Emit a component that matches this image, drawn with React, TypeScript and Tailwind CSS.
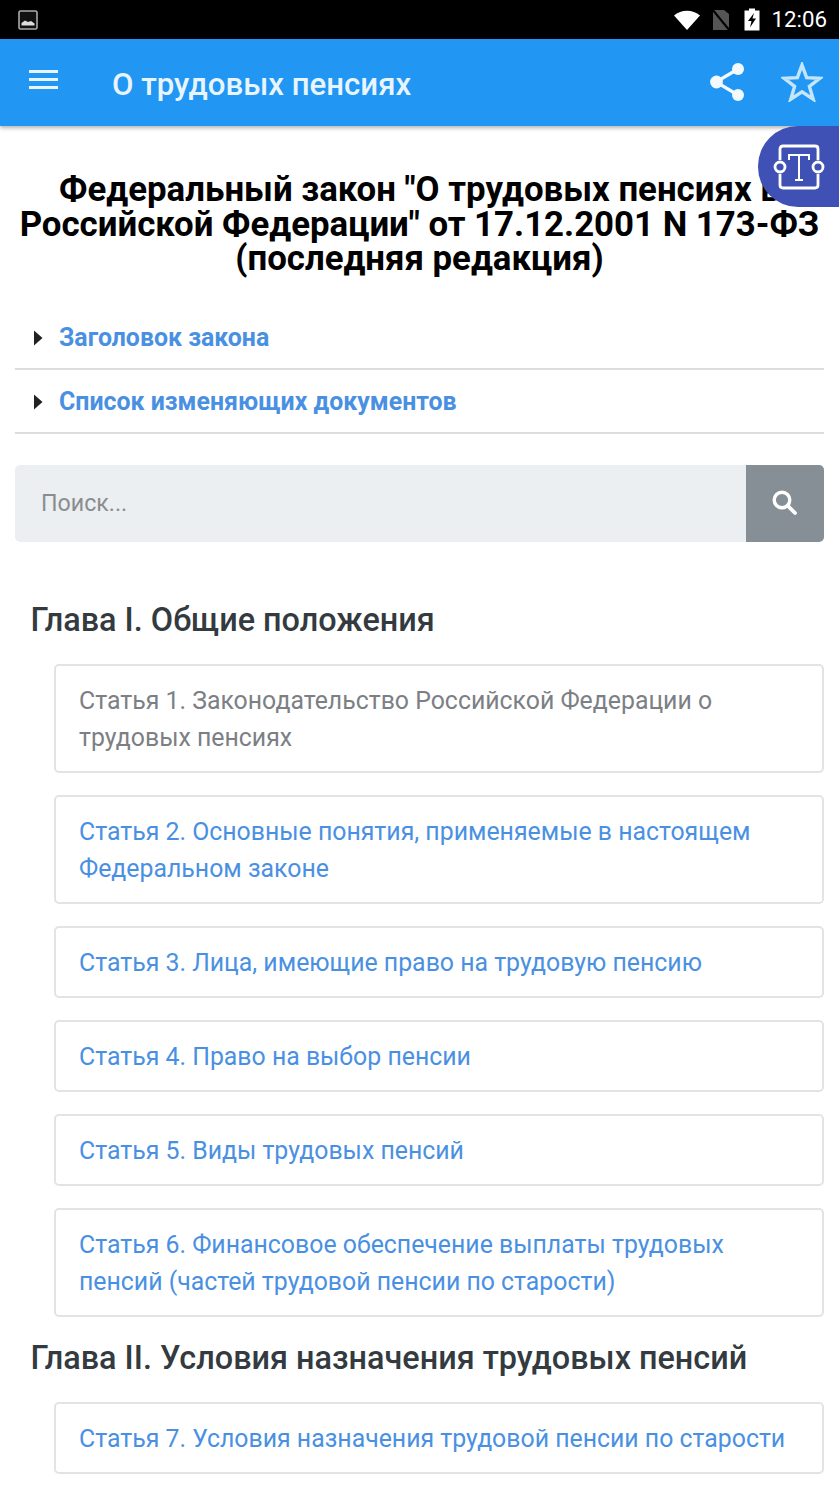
import React from "react";

const FONT = "font-['Roboto','Noto_Sans',sans-serif]";

function Card({ text, muted }: { text: React.ReactNode; muted?: boolean }) {
  return (
    <div className={`ml-[54px] mr-[15.5px] rounded-[5px] border-2 border-[#e2e3e5] pl-[23px] pr-[20px] pt-[16px] pb-[14px] text-[24.85px] leading-[37.5px] ${muted ? "text-[#7c8084]" : "text-[#4a90e2]"}`}>
      {text}
    </div>
  );
}

function Acc({ text }: { text: string }) {
  return (
    <div className="ml-[15px] mr-[15.5px] flex h-[64px] items-center border-b-2 border-[#dcdcdc] pl-[18px] pt-[2px]">
      <svg width="10" height="16" viewBox="0 0 10 16" className="mr-[16px] shrink-0">
        <path d="M1 0.5 L9.5 8 L1 15.5 Z" fill="#222" />
      </svg>
      <span className="text-[24.9px] font-bold text-[#4a90e2]">{text}</span>
    </div>
  );
}

export default function App() {
  return (
    <div className={`relative h-[1492px] w-[839px] overflow-hidden bg-white ${FONT}`}>
      {/* status bar */}
      <div className="flex h-[39px] items-center bg-black pl-[18px] pr-[12px]">
        <svg width="20" height="20" viewBox="0 0 20 20">
          <rect x="1" y="1" width="18" height="18" rx="1.5" fill="#111" stroke="#aaa" strokeWidth="1.6" />
          <path d="M3.5 15.5 V13 L7 10.5 L10 12 L13 11 L16.5 13.5 V15.5 Z" fill="#ddd" />
        </svg>
        <div className="ml-auto flex items-center">
          <svg width="28" height="22" viewBox="0 0 28 22">
            <path d="M1 6.5 C8 0 20 0 27 6.5 L14 21 Z" fill="#fff" />
          </svg>
          <svg width="20" height="24" viewBox="0 0 20 24" className="ml-[10px]">
            <path d="M2 2 H13 L18 6 V22 H2 Z" fill="#555" />
            <path d="M1 1 L19 23" stroke="#000" strokeWidth="2" />
          </svg>
          <svg width="16" height="23" viewBox="0 0 16 23" className="ml-[13px]">
            <path d="M5 0.5 H11 V2.5 H15.5 V22.5 H0.5 V2.5 H5 Z" fill="#fff" />
            <path d="M10 5 L4 13 H7.5 L6 19.5 L12 10.5 H8.5 Z" fill="#000" />
          </svg>
          <span className="ml-[11px] text-[22.3px] leading-none text-white">12:06</span>
        </div>
      </div>

      {/* app bar */}
      <div className="flex h-[87px] items-center bg-[#2196f3] pb-[2px] shadow-[0_2px_4px_rgba(0,0,0,0.3)]">
        <div className="ml-[29px] flex w-[29px] flex-col gap-[5px] pb-[5px]">
          <div className="h-[3px] bg-[#e8f4fe]" />
          <div className="h-[3px] bg-[#e8f4fe]" />
          <div className="h-[3px] bg-[#e8f4fe]" />
        </div>
        <div className="ml-[54px] pt-[8px] text-[31.2px] font-medium text-[#e8f4fe]">О трудовых пенсиях</div>
        <svg width="38" height="40" viewBox="0 0 38 40" className="ml-auto">
          <path d="M29 7 L7 20 L29 33" fill="none" stroke="#f2f9ff" strokeWidth="3.2" />
          <circle cx="29" cy="7" r="6" fill="#f2f9ff" />
          <circle cx="7.5" cy="20" r="6.4" fill="#f2f9ff" />
          <circle cx="29" cy="33" r="6" fill="#f2f9ff" />
        </svg>
        <svg width="42" height="40" viewBox="0 0 42 40" className="ml-[34px] mr-[16px]">
          <path d="M21 3 L25.6 15.6 L39 16.2 L28.4 24.4 L32.2 37.2 L21 29.8 L9.8 37.2 L13.6 24.4 L3 16.2 L16.4 15.6 Z" fill="none" stroke="#c4e6fd" strokeWidth="3.4" strokeLinejoin="miter" />
        </svg>
      </div>

      {/* floating button */}
      <div className="absolute right-0 top-[126px] z-10 flex h-[81px] w-[81px] items-center justify-center rounded-l-[40px] bg-[#3f51b5] pl-[1px]">
        <svg width="52" height="46" viewBox="0 0 52 46">
          <path d="M7 16 V5 Q7 2 10 2 H42 Q45 2 45 5 V16 M45 30 V41 Q45 44 42 44 H10 Q7 44 7 41 V30" fill="none" stroke="#fff" strokeWidth="2.8" />
          <circle cx="7" cy="23" r="5" fill="none" stroke="#fff" strokeWidth="2.8" />
          <circle cx="45" cy="23" r="5" fill="none" stroke="#fff" strokeWidth="2.8" />
          <path d="M16 16 V11 H36 V16 M26 11 V36 M22 36 H30" fill="none" stroke="#fff" strokeWidth="2" />
        </svg>
      </div>

      {/* title */}
      <h1 className="mx-[5px] mt-[46px] text-center text-[34.8px] font-bold leading-[34.5px] text-black">
        Федеральный закон "О трудовых пенсиях в<br />Российской Федерации" от 17.12.2001 N 173-ФЗ<br />(последняя редакция)
      </h1>

      <div className="mt-[30px]">
        <Acc text="Заголовок закона" />
        <Acc text="Список изменяющих документов" />
      </div>

      {/* search */}
      <div className="ml-[15px] mr-[15.5px] mt-[31px] flex h-[77.5px] overflow-hidden rounded-[5px] bg-[#eceff1]">
        <div className="flex flex-1 items-center pl-[26px] text-[23.2px] text-[#8a8d90]">Поиск...</div>
        <div className="flex w-[78px] items-center justify-center bg-[#868e96] pb-[2px] pr-[2px]">
          <svg width="28" height="28" viewBox="0 0 28 28">
            <circle cx="12" cy="12" r="7.8" fill="none" stroke="#fff" strokeWidth="3.4" />
            <path d="M18 18 L25 25" stroke="#fff" strokeWidth="3.8" strokeLinecap="round" />
          </svg>
        </div>
      </div>

      <h2 className="ml-[30.5px] mt-[56.5px] text-[32.4px] font-medium leading-[42px] text-[#333a40]">Глава I. Общие положения</h2>
      <div className="mt-[23px] flex flex-col gap-[22.4px]">
        <Card muted text={<>Статья 1. Законодательство Российской Федерации о<br />трудовых пенсиях</>} />
        <Card text={<>Статья 2. Основные понятия, применяемые в настоящем<br />Федеральном законе</>} />
        <Card text="Статья 3. Лица, имеющие право на трудовую пенсию" />
        <Card text="Статья 4. Право на выбор пенсии" />
        <Card text="Статья 5. Виды трудовых пенсий" />
        <Card text={<>Статья 6. Финансовое обеспечение выплаты трудовых<br />пенсий (частей трудовой пенсии по старости)</>} />
      </div>
      <h2 className="ml-[30.5px] mt-[20.5px] text-[32.4px] font-medium leading-[42px] text-[#333a40]">Глава II. Условия назначения трудовых пенсий</h2>
      <div className="mt-[23px]">
        <Card text="Статья 7. Условия назначения трудовой пенсии по старости" />
      </div>
    </div>
  );
}
